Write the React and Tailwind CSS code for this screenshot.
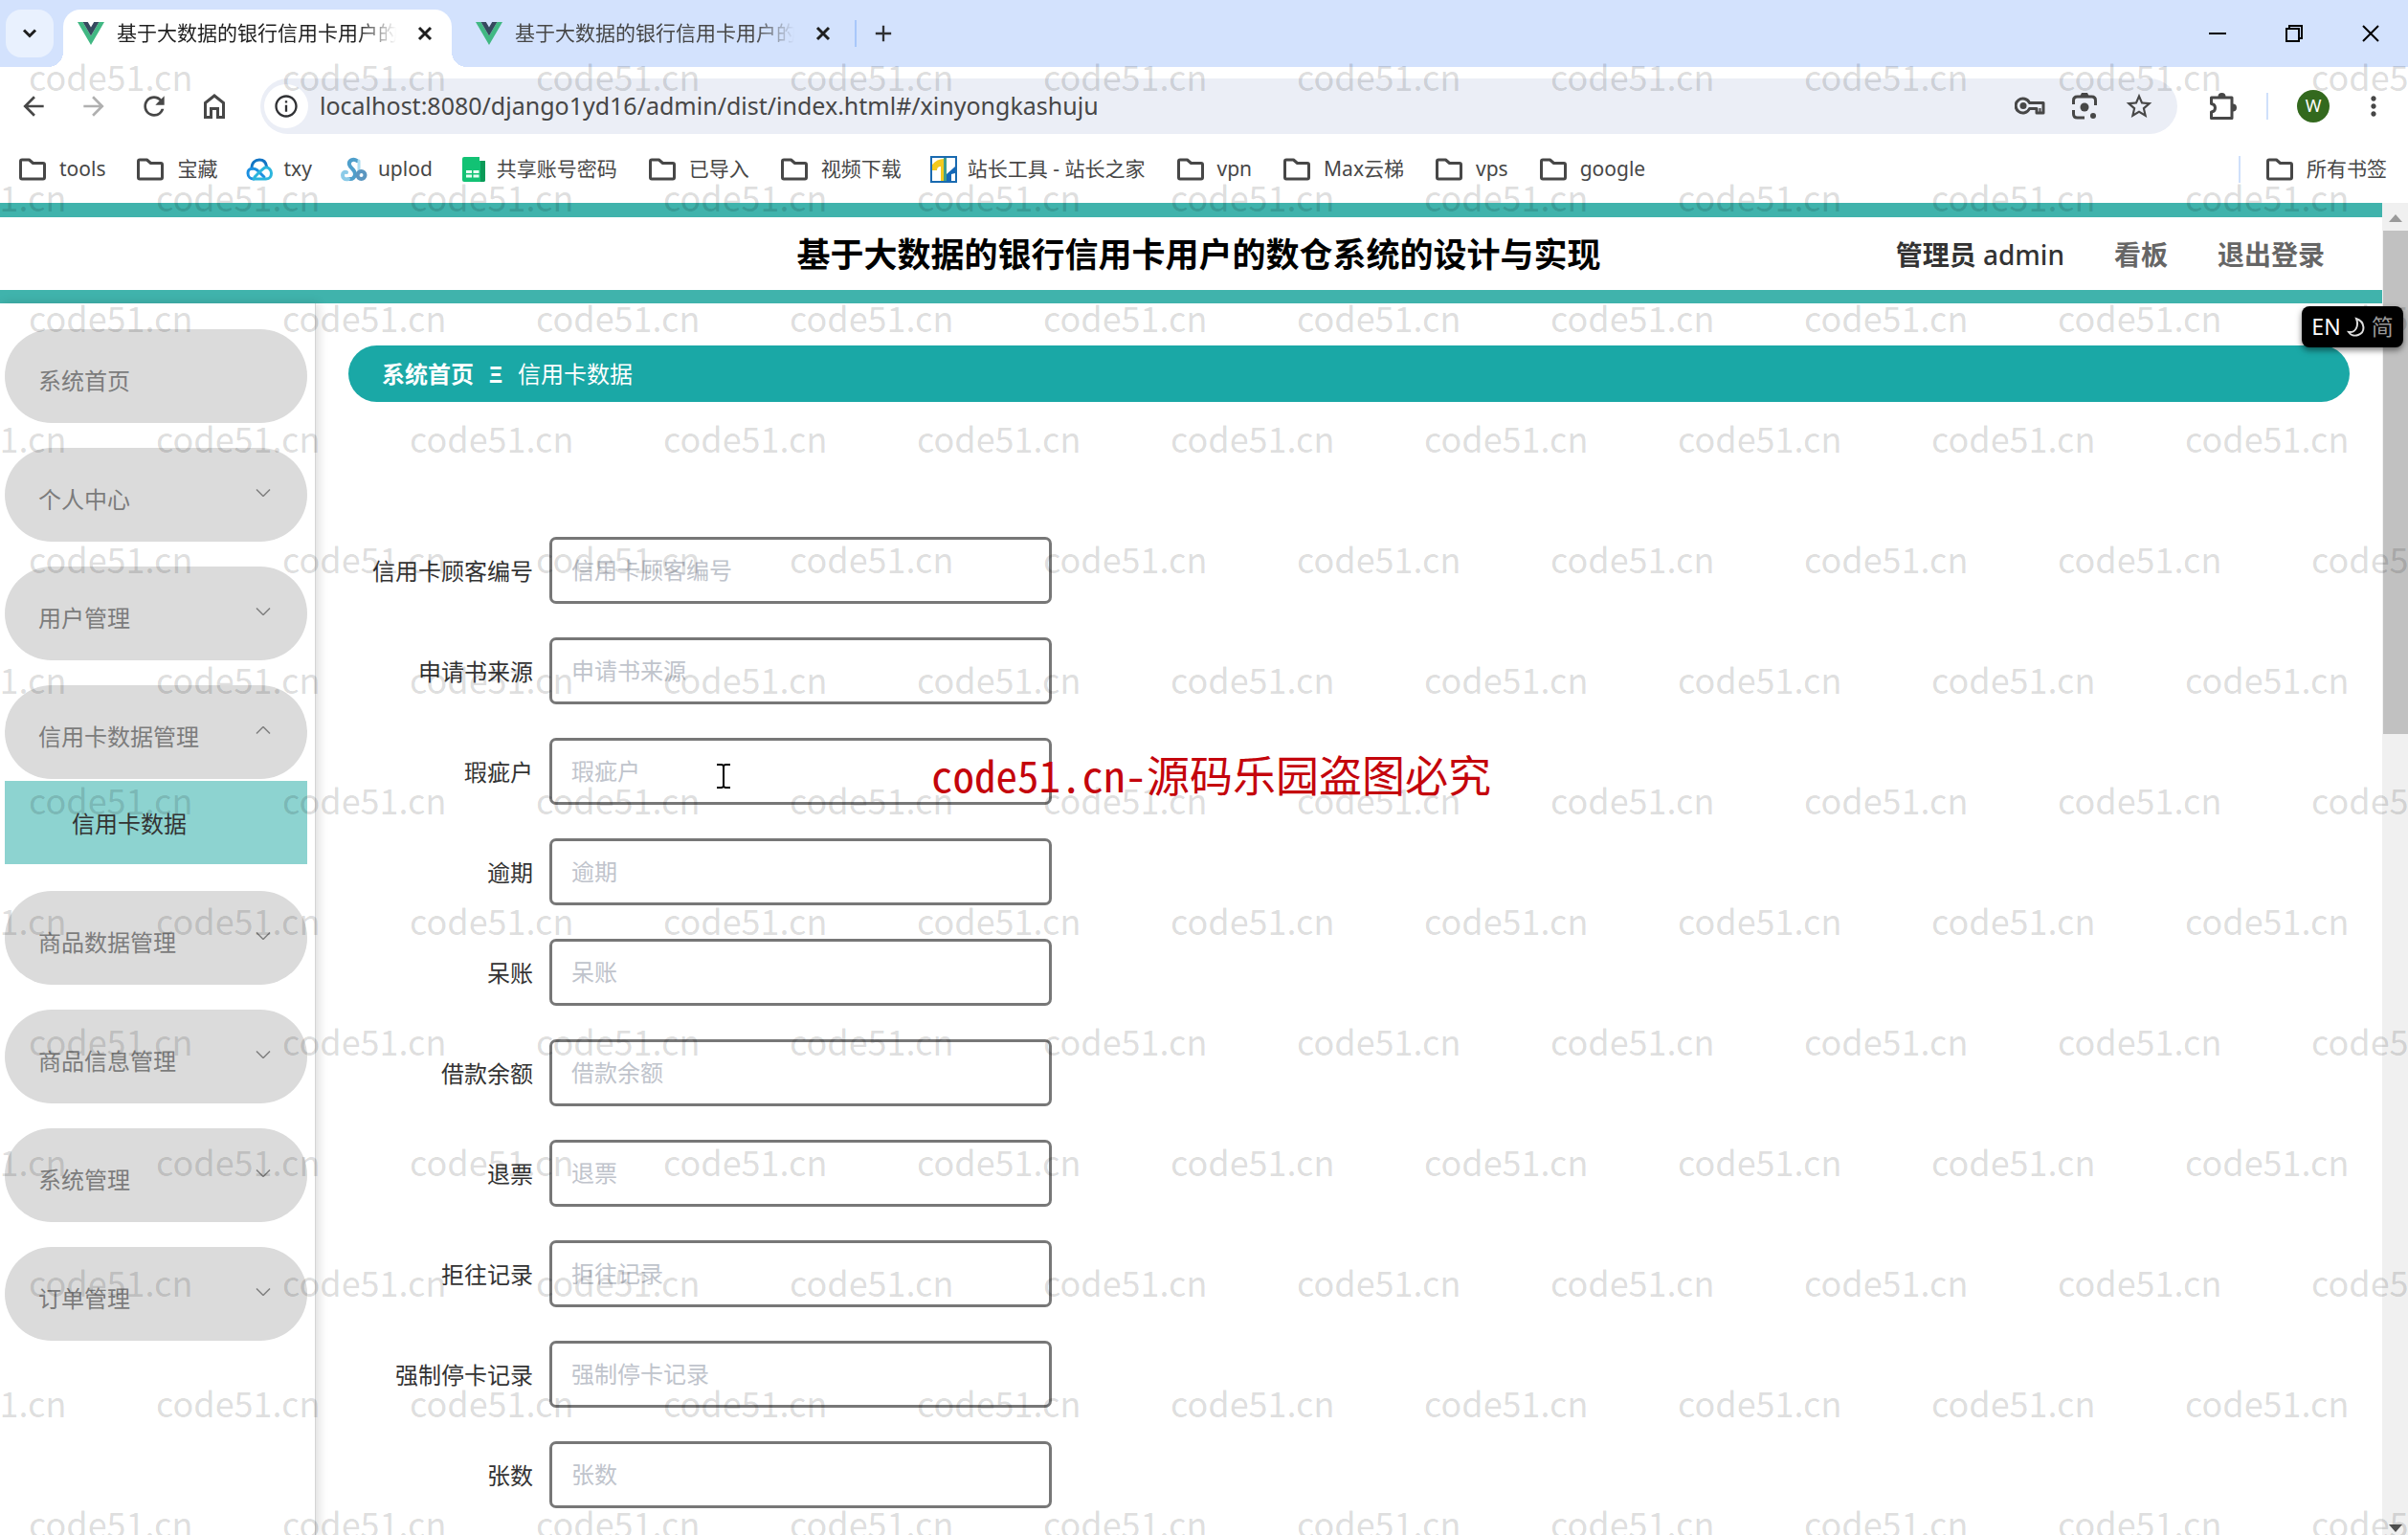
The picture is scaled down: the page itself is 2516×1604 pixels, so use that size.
import {
  MdAdd,
  MdArrowBack,
  MdArrowForward,
  MdInfoOutline,
  MdMoreVert,
  MdRefresh,
  MdStarBorder,
} from 'react-icons/md';

const MENU = [
  { label: '系统首页' },
  { label: '个人中心', arrow: 'down' },
  { label: '用户管理', arrow: 'down' },
  { label: '信用卡数据管理', arrow: 'up', children: ['信用卡数据'] },
  { label: '商品数据管理', arrow: 'down' },
  { label: '商品信息管理', arrow: 'down' },
  { label: '系统管理', arrow: 'down' },
  { label: '订单管理', arrow: 'down' },
];

const FIELDS = [
  '信用卡顾客编号',
  '申请书来源',
  '瑕疵户',
  '逾期',
  '呆账',
  '借款余额',
  '退票',
  '拒往记录',
  '强制停卡记录',
  '张数',
];

const BOOKMARKS = [
  { label: 'tools', Icon: FolderIcon },
  { label: '宝藏', Icon: FolderIcon },
  { label: 'txy', Icon: CloudIcon },
  { label: 'uplod', Icon: UplodIcon },
  { label: '共享账号密码', Icon: SheetIcon },
  { label: '已导入', Icon: FolderIcon },
  { label: '视频下载', Icon: FolderIcon },
  { label: '站长工具 - 站长之家', Icon: ChinazIcon },
  { label: 'vpn', Icon: FolderIcon },
  { label: 'Max云梯', Icon: FolderIcon },
  { label: 'vps', Icon: FolderIcon },
  { label: 'google', Icon: FolderIcon },
];

const WATERMARK_ROWS = Array.from({ length: 13 }, (_, i) => i);
const WATERMARK_COLS = Array.from({ length: 10 }, (_, i) => i);

function FolderIcon() {
  return (
    <svg viewBox="0 0 28 24" className="mx-[3px] h-6 w-7" fill="none" stroke="#474747" strokeWidth="3" strokeLinejoin="round">
      <path d="M1.500 3.500Q1.500 2 3 2h7.500l4 3.500h10.500Q26.500 5.500 26.500 7v13.500Q26.500 22 25 22H3Q1.500 22 1.500 20.500z" />
    </svg>
  );
}

function CloudIcon() {
  return (
    <svg viewBox="0 0 28 24" className="w-7 h-6" fill="none" strokeWidth="3" strokeLinecap="round" strokeLinejoin="round">
      <path d="M6 11C6 5 9.500 2 14 2s7 3 7.500 7" stroke="#1274c4" />
      <path d="M19 20L12 13C9 10.500 2 10 2 16c0 4 3 6 6 6" stroke="#1c8fe0" />
      <path d="M8 22h13c4 0 5.500-3 5.500-6S24 9.500 20.500 10C18 10.500 16 13 9 20" stroke="#2bb5dd" />
    </svg>
  );
}

function UplodIcon() {
  return (
    <svg viewBox="0 0 28 26" className="w-7 h-[26px]" fill="none" strokeLinecap="round">
      <path d="M17 4C13 1 8 4 9 8c1 4 6 5 6 10a5 5 0 0 1-6 5" stroke="#4f9fcb" strokeWidth="4" />
      <path d="M8 23c-4 1-6-1-6-4 0-2 2-4 4-3" stroke="#8ccbe8" strokeWidth="4" />
      <path d="M19 4v14" stroke="#a9dcf0" strokeWidth="3" />
      <circle cx="21.500" cy="19" r="4" stroke="#5b96c0" strokeWidth="4" />
    </svg>
  );
}

function SheetIcon() {
  return (
    <svg viewBox="0 0 24 26" className="mx-px w-6 h-[26px]">
      <path d="M2 0h16v4h6v20a2 2 0 0 1-2 2H2a2 2 0 0 1-2-2V2a2 2 0 0 1 2-2z" fill="#12c274" />
      <path d="M19 4h5v20a2 2 0 0 1-2 2h-3z" fill="#0b9a58" />
      <path d="M4 14h6v3H4zM11.500 14h6v3h-6zM4 18.500h6v3H4zM11.500 18.500h6v3h-6z" fill="#e8fff3" />
    </svg>
  );
}

function ChinazIcon() {
  return (
    <svg viewBox="0 0 28 28" className="w-7 h-7">
      <path d="M1 1h26v26H1z" fill="#fff" stroke="#1a6ab0" strokeWidth="2" />
      <path d="M2 15V9q5-6 12-6v23h-3V11q-4 0-4 4z" fill="#f3c91e" />
      <path d="M14 2h3v24h-3z" fill="#3f9d8c" />
      <path d="M17 26v-7l9-8v7l-4 1v7z" fill="#1468b8" />
    </svg>
  );
}

function VueLogo() {
  return (
    <svg viewBox="0 0 28 24" className="w-7 h-6 shrink-0">
      <path d="M0 0h5.600L14 14.500 22.400 0H28L14 24z" fill="#41b883" />
      <path d="M5.600 0h5.200L14 5.500 17.200 0h5.200L14 14.500z" fill="#35495e" />
    </svg>
  );
}

function HomeIcon() {
  return (
    <svg viewBox="0 0 32 32" className="size-8" fill="none" stroke="currentColor" strokeWidth="3">
      <path d="M6.500 27.500V12.500L16 5l9.500 7.500v15h-6v-9h-7v9z" />
    </svg>
  );
}

function KeyIcon() {
  return (
    <svg viewBox="0 0 32 22" className="w-8 h-[22px]" fill="none" stroke="#474747" strokeWidth="3" strokeLinejoin="round">
      <path d="M15.500 7.500h14.500V18h-7v-4.500h-7.500a7.500 7.500 0 1 1 0-6z" />
      <path d="M26.500 13v5" strokeWidth="2" />
      <circle cx="9" cy="10.500" r="3.500" fill="#474747" stroke="none" />
    </svg>
  );
}

function LensIcon() {
  return (
    <svg viewBox="0 0 28 30" className="w-7 h-[30px]" fill="none" stroke="#474747" strokeWidth="3">
      <path d="M2.500 13V9q0-4 4-4h15q4 0 4 4v5M2.500 19v4q0 4 4 4H14" />
      <path d="M9 5l2-4h6l2 4z" fill="#474747" stroke="none" />
      <circle cx="14" cy="16" r="4.500" fill="#474747" stroke="none" />
      <circle cx="23" cy="25" r="3" fill="#474747" stroke="none" />
    </svg>
  );
}

function PuzzleIcon() {
  return (
    <svg viewBox="0 0 30 30" className="w-[30px] h-[30px]" fill="none" stroke="#474747" strokeWidth="3" strokeLinejoin="round">
      <path d="M2.500 6h21.500v21.500h-21.500v-6.500q4-.5 4-4.250t-4-4.250z" />
      <path d="M9.500 5a4 4 0 0 1 8 0zM25 12.500a4 4 0 0 1 0 8z" fill="#474747" stroke="none" />
    </svg>
  );
}

function Arrow({ dir }) {
  return (
    <svg viewBox="0 0 16 8" className="w-4 h-2 mb-1" fill="none" stroke="#808080" strokeWidth="1.500">
      <path d={dir === 'up' ? 'M1 7.500l7-7 7 7' : 'M1 .5l7 7 7-7'} />
    </svg>
  );
}

function Tab({ active }) {
  return (
    <div
      className={
        active
          ? 'relative flex h-[60px] w-[406px] items-center rounded-t-[18px] bg-white pb-[10px] pl-[15px] pr-4'
          : 'flex h-[60px] w-[416px] items-center pb-[10px] pl-[25px] pr-4'
      }
    >
      {active && (
        <>
          <span className="absolute -left-4 bottom-0 size-4 bg-[radial-gradient(circle_at_0_0,transparent_16px,#fff_16px)]" />
          <span className="absolute -right-4 bottom-0 size-4 bg-[radial-gradient(circle_at_100%_0,transparent_16px,#fff_16px)]" />
        </>
      )}
      <VueLogo />
      <span
        className={
          active
            ? 'ml-[13px] w-[292px] overflow-hidden whitespace-nowrap text-[21px] text-[#1f1f1f] [mask-image:linear-gradient(90deg,#000_86%,transparent)]'
            : 'ml-[13px] w-[292px] overflow-hidden whitespace-nowrap text-[21px] text-[#474747] [mask-image:linear-gradient(90deg,#000_86%,transparent)]'
        }
      >
        基于大数据的银行信用卡用户的
      </span>
      <button aria-label="关闭标签页" className="ml-auto flex size-6 items-center justify-center">
        <svg viewBox="0 0 16 16" className="size-4" stroke="#1f1f1f" strokeWidth="3">
          <path d="M2 2l12 12M14 2L2 14" />
        </svg>
      </button>
    </div>
  );
}

function TabStrip() {
  return (
    <div className="flex h-[70px] items-center bg-[#d3e2fd]">
      <button aria-label="搜索标签页" className="ml-[6px] mr-[10px] flex size-[50px] items-center justify-center rounded-2xl bg-[#e9f1fe]">
        <svg viewBox="0 0 16 10" className="w-4 h-[10px]" fill="none" stroke="#1f1f1f" strokeWidth="3">
          <path d="M2 1.500l6 6 6-6" />
        </svg>
      </button>
      <div className="flex items-end self-end">
        <Tab active />
        <Tab />
      </div>
      <span className="ml-[5px] h-7 w-[2px] bg-[#a8c7fa]" />
      <button aria-label="新标签页" className="ml-[14px] flex size-7 items-center justify-center">
        <MdAdd className="size-7 text-[#303134]" />
      </button>
      <div className="ml-auto mr-[30px] flex items-center gap-[62px]">
        <button aria-label="最小化" className="flex h-5 w-[18px] items-center">
          <span className="h-[2px] w-full bg-black" />
        </button>
        <button aria-label="还原" className="size-[18px]">
          <svg viewBox="0 0 18 18" className="size-[18px]" fill="none" stroke="#000" strokeWidth="2">
            <path d="M1 4h13v13H1zM4 4V1h13v13h-3" />
          </svg>
        </button>
        <button aria-label="关闭" className="size-[18px]">
          <svg viewBox="0 0 18 18" className="size-[18px]" fill="none" stroke="#000" strokeWidth="2">
            <path d="M1 1l16 16M17 1L1 17" />
          </svg>
        </button>
      </div>
    </div>
  );
}

function Toolbar() {
  return (
    <div className="flex h-20 items-center bg-white pl-[19px] pr-5 pt-px">
      <div className="flex items-center gap-[31px] text-[#474747]">
        <button aria-label="后退"><MdArrowBack className="size-8" /></button>
        <button aria-label="前进" className="text-[#b0b0b0]"><MdArrowForward className="size-8" /></button>
        <button aria-label="重新加载"><MdRefresh className="size-8" /></button>
        <button aria-label="主页"><HomeIcon /></button>
      </div>
      <div className="ml-8 flex h-[58px] grow items-center rounded-full bg-[#ebeef6] pl-1 pr-6">
        <span className="flex size-[46px] items-center justify-center rounded-full bg-white">
          <MdInfoOutline className="size-7 text-[#303134]" />
        </span>
        <input
          aria-label="地址栏"
          defaultValue="localhost:8080/django1yd16/admin/dist/index.html#/xinyongkashuju"
          className="ml-3 min-w-0 grow bg-transparent text-[25px] text-[#474747] outline-none"
        />
        <div className="flex items-center gap-[27px] text-[#474747]">
          <KeyIcon />
          <LensIcon />
          <MdStarBorder className="size-8" />
        </div>
      </div>
      <button aria-label="扩展程序" className="ml-[33px]"><PuzzleIcon /></button>
      <span className="ml-[30px] h-7 w-[2px] bg-[#cfe0fb]" />
      <button className="ml-[30px] flex size-[34px] items-center justify-center rounded-full bg-[#33691e] text-[18px] text-white">W</button>
      <button aria-label="更多" className="ml-[30px] text-[#474747]"><MdMoreVert className="size-8" /></button>
    </div>
  );
}

function Bookmarks() {
  return (
    <div className="flex h-[62px] items-center bg-white pb-2 pl-[17px] pr-[22px] text-[21px] text-[#474747]">
      <div className="flex items-center gap-[30px]">
        {BOOKMARKS.map(({ label, Icon }) => (
          <a key={label} href="#" className="flex items-center gap-[11px] whitespace-nowrap">
            <Icon />
            {label}
          </a>
        ))}
      </div>
      <div className="ml-auto flex items-center gap-6">
        <span className="h-7 w-[2px] bg-[#cfe0fb]" />
        <a href="#" className="flex items-center gap-[11px] whitespace-nowrap">
          <FolderIcon />
          所有书签
        </a>
      </div>
    </div>
  );
}

function PageHeader() {
  return (
    <header className="relative flex h-[105px] shrink-0 items-center justify-end border-t-[15px] border-b-[14px] border-[#40b3ac] bg-white pr-[60px] pt-[2px] text-[28px] font-bold">
      <h1 className="absolute inset-x-0 pl-4 text-center text-[35px] text-black">基于大数据的银行信用卡用户的数仓系统的设计与实现</h1>
      <div className="relative flex items-center gap-[52px] text-[#666]">
        <span className="text-[#333]">管理员 <span className="font-medium">admin</span></span>
        <a href="#">看板</a>
        <a href="#">退出登录</a>
      </div>
    </header>
  );
}

function Sidebar() {
  return (
    <nav className="relative w-[330px] shrink-0 border-r border-[#d4d4d4] bg-white pl-[5px] pt-[27px] shadow-[3px_0_10px_rgba(0,0,0,0.14)]">
      <ul className="flex w-[316px] flex-col gap-[26px] text-[24px]">
        {MENU.map(({ label, arrow, children }) => (
          <li key={label}>
            <button className="flex h-[98px] w-full items-center justify-between rounded-full bg-[#dbdbdb] pl-[35px] pr-[38px] text-[#7c7c7c]">
              <span className="pt-[10px]">{label}</span>
              {arrow && <Arrow dir={arrow} />}
            </button>
            {children?.map((child) => (
              <a key={child} href="#" className="mt-[2px] mb-[2px] flex h-[87px] items-center bg-[#8dd3d0] pl-[70px] pt-[2px] text-[#333]">
                {child}
              </a>
            ))}
          </li>
        ))}
      </ul>
    </nav>
  );
}

function Content() {
  return (
    <main className="grow pl-[34px] pr-[34px] pt-11 text-[24px]">
      <div className="flex h-[59px] items-center rounded-full bg-[#1aa8a6] pl-[35px] text-white">
        <a href="#" className="font-bold">系统首页</a>
        <span className="w-[46px] text-center font-bold">Ξ</span>
        <span>信用卡数据</span>
      </div>
      <form className="mt-[141px] flex flex-col gap-[35px]">
        {FIELDS.map((name, i) => (
          <div key={name} className="flex h-[70px] items-center">
            <label htmlFor={`field-${i}`} className="w-[193px] pt-[2px] text-right text-[#333]">{name}</label>
            <input
              id={`field-${i}`}
              placeholder={name}
              className="ml-[17px] h-[70px] w-[525px] rounded-[7px] border-[3px] border-[#777] bg-transparent px-5 pb-[2px] outline-none placeholder:text-[#c0c4cc]"
            />
          </div>
        ))}
      </form>
    </main>
  );
}

function Scrollbar() {
  return (
    <div className="flex w-[27px] shrink-0 flex-col items-center bg-[#f0f0f0] pl-px">
      <svg viewBox="0 0 14 8" className="mt-3 mb-[9px] w-[14px] h-2 shrink-0"><path d="M7 0l7 8H0z" fill="#9a9a9a" /></svg>
      <span className="h-[526px] w-full bg-[#c1c1c1]" />
      <svg viewBox="0 0 14 8" className="mt-auto mb-[3px] w-[14px] h-2 shrink-0"><path d="M0 0h14L7 8z" fill="#505050" /></svg>
    </div>
  );
}

function Watermark() {
  return (
    <div aria-hidden="true" className="pointer-events-none absolute inset-0 z-10 overflow-hidden pt-4 font-['Noto_Sans_CJK_SC',sans-serif] text-[36px] text-black/15">
      {WATERMARK_ROWS.map((row) => (
        <div key={row} className={row % 2 ? '-ml-[102px] flex h-[126px] items-center' : 'ml-[30px] flex h-[126px] items-center'}>
          {WATERMARK_COLS.map((col) => (
            <span key={col} className="w-[265px] shrink-0">code51.cn</span>
          ))}
        </div>
      ))}
    </div>
  );
}

function InputBadge() {
  return (
    <div className="absolute right-[5px] top-[320px] z-20 flex h-[43px] w-[106px] items-center justify-center gap-[6px] rounded-lg bg-black text-[23px] text-white shadow-[0_3px_6px_rgba(0,0,0,0.5)]">
      EN
      <svg viewBox="0 0 20 22" className="h-[22px] w-5" fill="none" stroke="#ddd" strokeWidth="2">
        <path d="M10 2c9 3 10 14 2 17-4 1.500-8 0-10-3 7 1 11-6 8-14z" />
      </svg>
      <span className="text-[#999]">简</span>
    </div>
  );
}

export default function App() {
  return (
    <div className="relative flex h-screen flex-col overflow-hidden bg-white font-['Noto_Sans','Noto_Sans_CJK_SC',sans-serif]">
      <TabStrip />
      <Toolbar />
      <Bookmarks />
      <div className="flex min-h-0 grow">
        <div className="flex min-w-0 grow flex-col overflow-hidden">
          <PageHeader />
          <div className="flex grow">
            <Sidebar />
            <Content />
          </div>
        </div>
        <Scrollbar />
      </div>

      <Watermark />
      <InputBadge />
      <svg viewBox="0 0 14 26" className="absolute left-[749px] top-[798px] z-20 w-[14px] h-[26px]" fill="none" stroke="#000" strokeWidth="2">
        <path d="M0 1h5l2 1 2-1h5M7 2v22M0 25h5l2-1 2 1h5" />
      </svg>
      <p className="absolute left-[973px] top-[775px] z-20 whitespace-nowrap font-['Noto_Sans_Mono_CJK_SC','Liberation_Mono',monospace] text-[45px] leading-[68px] text-[#c4050c]">
        code51.cn-源码乐园盗图必究
      </p>
    </div>
  );
}
